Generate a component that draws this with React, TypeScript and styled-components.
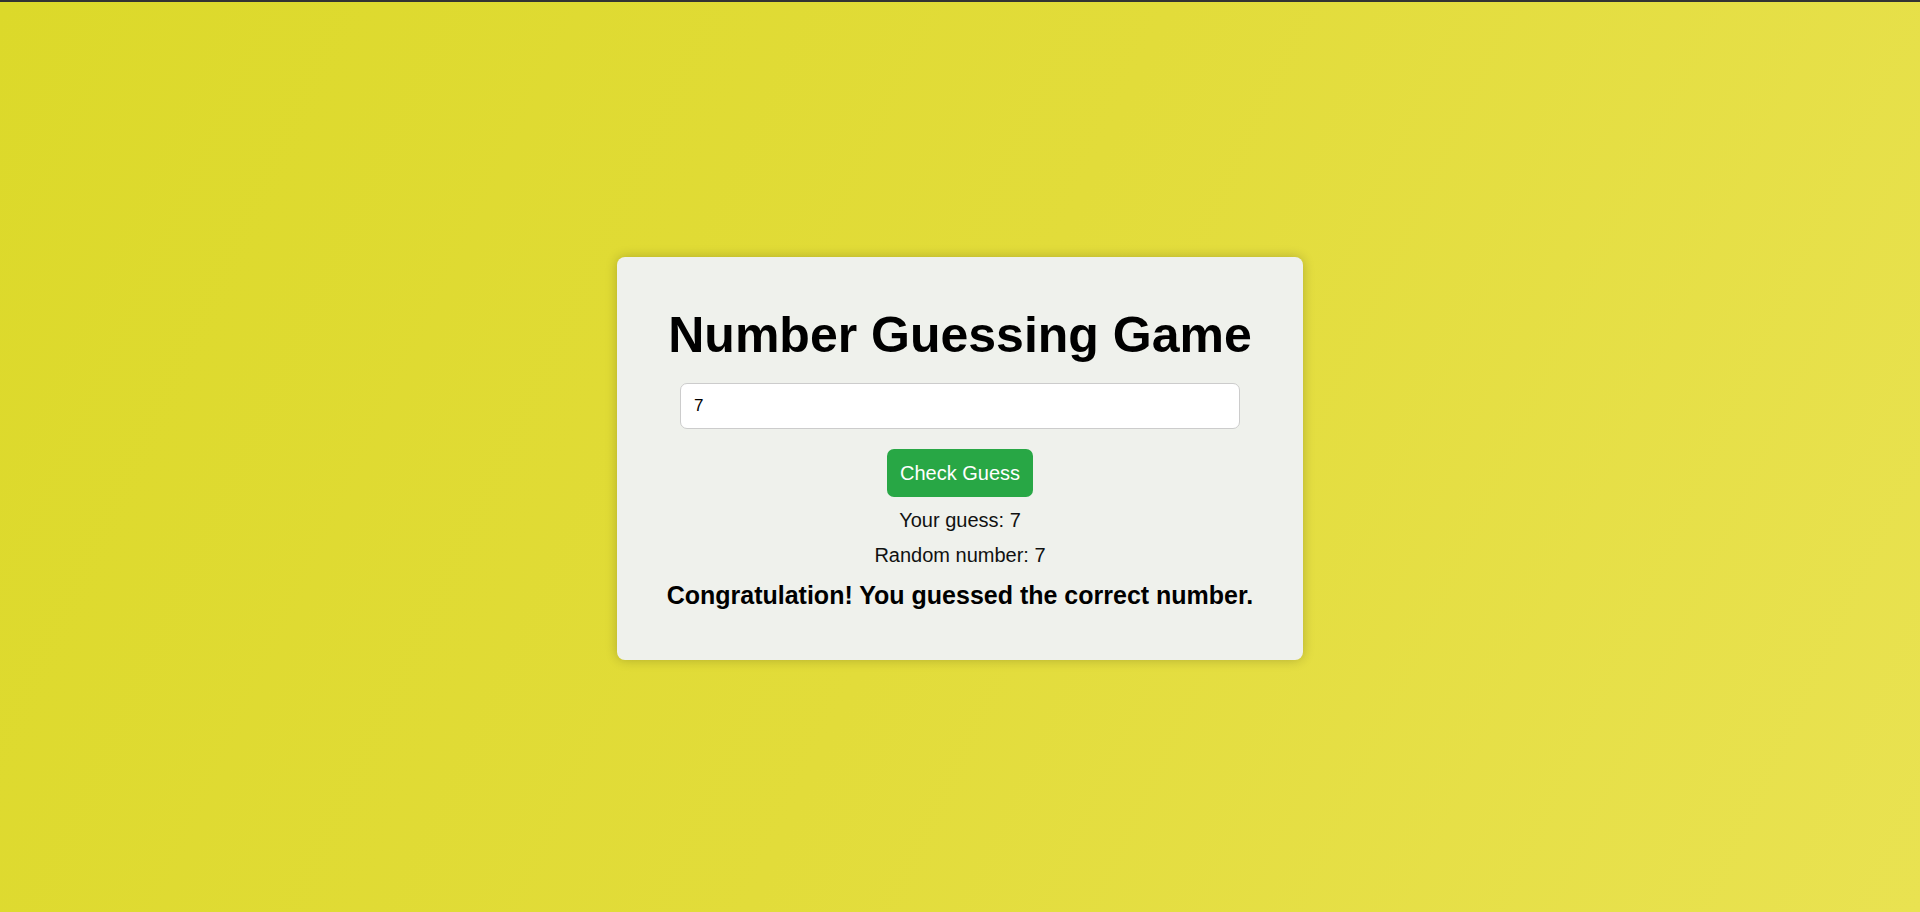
import React, { useState } from 'react'
import styled, { createGlobalStyle } from 'styled-components'

const GlobalStyle = createGlobalStyle`
    html, body {
        margin: 0;
        padding: 0;
        height: 100%;
    }
    body {
        font-family: "Liberation Sans", Arial, sans-serif;
        color: #000;
    }
    #root {
        height: 100%;
    }
`

const Page = styled.div`
    height: 100%;
    box-sizing: border-box;
    border-top: 2px solid #333;
    background: linear-gradient(115deg, #dcd92a 0%, #e2dc3a 50%, #e9e251 100%);
    display: flex;
    align-items: center;
    justify-content: center;
`

const Card = styled.div`
    width: 686px;
    box-sizing: border-box;
    padding: 50px 25px;
    background-color: #eff1ec;
    border-radius: 8px;
    box-shadow: 0 0 12px rgba(0, 0, 0, 0.22);
    display: flex;
    flex-direction: column;
    align-items: center;
    margin-top: 3px;
`

const Title = styled.h1`
    margin: 0 0 20px;
    font-size: 50px;
    line-height: 56px;
    font-weight: bold;
    white-space: nowrap;
    text-align: center;
`

const GuessInput = styled.input`
    width: 560px;
    height: 46px;
    box-sizing: border-box;
    padding: 0 13px;
    margin: 0 0 20px;
    font-family: "Liberation Sans", Arial, sans-serif;
    font-size: 17px;
    color: #000;
    background: #fff;
    border: 1px solid #cccccc;
    border-radius: 7px;
    outline: none;
`

const CheckButton = styled.button`
    height: 48px;
    padding: 0 13px;
    margin: 0 0 12px;
    font-family: "Liberation Sans", Arial, sans-serif;
    font-size: 20px;
    color: #fff;
    background-color: #28a745;
    border: none;
    border-radius: 7px;
    cursor: pointer;
`

const Line = styled.p<{ $bold?: boolean; $gap?: number }>`
    margin: 0 0 ${p => p.$gap ?? 0}px;
    font-size: ${p => (p.$bold ? 25 : 20)}px;
    line-height: ${p => (p.$bold ? 29 : 23)}px;
    font-weight: ${p => (p.$bold ? 'bold' : 'normal')};
    color: ${p => (p.$bold ? '#000' : '#111')};
    white-space: nowrap;
    text-align: center;
`

export default function App() {
    const [value, setValue] = useState('7')
    const [guess, setGuess] = useState(7)
    const randomNumber = 7

    return (
        <>
            <GlobalStyle />
            <Page>
                <Card>
                    <Title>Number Guessing Game</Title>
                    <GuessInput
                        type="text"
                        value={value}
                        onChange={e => setValue(e.target.value)}
                    />
                    <CheckButton onClick={() => setGuess(Number(value))}>Check Guess</CheckButton>
                    <Line $gap={12}>Your guess: {guess}</Line>
                    <Line $gap={14}>Random number: {randomNumber}</Line>
                    <Line $bold>
                        {guess === randomNumber
                            ? 'Congratulation! You guessed the correct number.'
                            : 'Sorry, try again.'}
                    </Line>
                </Card>
            </Page>
        </>
    )
}
